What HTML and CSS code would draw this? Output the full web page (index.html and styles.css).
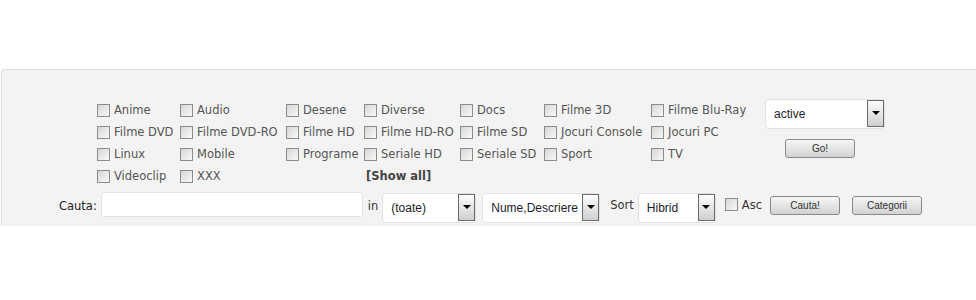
FILE: index.html
```html
<!DOCTYPE html>
<html lang="ro">
<head>
  <meta charset="UTF-8">
  <title>Cautare torrente</title>
  <link rel="stylesheet" href="styles.css">
</head>
<body>
  <div class="panel">
    <div class="top">
      <div class="cats">
        <label class="cat"><input type="checkbox"> Anime</label>
        <label class="cat"><input type="checkbox"> Audio</label>
        <label class="cat"><input type="checkbox"> Desene</label>
        <label class="cat"><input type="checkbox"> Diverse</label>
        <label class="cat"><input type="checkbox"> Docs</label>
        <label class="cat"><input type="checkbox"> Filme 3D</label>
        <label class="cat"><input type="checkbox"> Filme Blu-Ray</label>

        <label class="cat"><input type="checkbox"> Filme DVD</label>
        <label class="cat"><input type="checkbox"> Filme DVD-RO</label>
        <label class="cat"><input type="checkbox"> Filme HD</label>
        <label class="cat"><input type="checkbox"> Filme HD-RO</label>
        <label class="cat"><input type="checkbox"> Filme SD</label>
        <label class="cat"><input type="checkbox"> Jocuri Console</label>
        <label class="cat"><input type="checkbox"> Jocuri PC</label>

        <label class="cat"><input type="checkbox"> Linux</label>
        <label class="cat"><input type="checkbox"> Mobile</label>
        <label class="cat"><input type="checkbox"> Programe</label>
        <label class="cat"><input type="checkbox"> Seriale HD</label>
        <label class="cat"><input type="checkbox"> Seriale SD</label>
        <label class="cat"><input type="checkbox"> Sport</label>
        <label class="cat"><input type="checkbox"> TV</label>

        <label class="cat"><input type="checkbox"> Videoclip</label>
        <label class="cat"><input type="checkbox"> XXX</label>
        <span></span>
        <a class="show-all" href="#">[Show all]</a>
      </div>

      <div class="status">
        <div class="combo combo-status"><span class="combo-text">active</span><span class="arrow"></span></div>
        <button class="btn btn-go">Go!</button>
      </div>
    </div>

    <div class="search">
      <span class="lbl lbl-cauta">Cauta:</span>
      <input class="search-input" type="text">
      <span class="lbl lbl-in">in</span>
      <div class="combo combo-cat"><span class="combo-text">(toate)</span><span class="arrow"></span></div>
      <div class="combo combo-field"><span class="combo-text">Nume,Descriere</span><span class="arrow"></span></div>
      <span class="lbl lbl-sort">Sort</span>
      <div class="combo combo-sort"><span class="combo-text">Hibrid</span><span class="arrow"></span></div>
      <label class="lbl lbl-asc"><input type="checkbox"> Asc</label>
      <button class="btn btn-cauta">Cauta!</button>
      <button class="btn btn-categ">Categorii</button>
    </div>
  </div>
</body>
</html>
```

FILE: styles.css
```css
body {
  margin: 0;
  background-color: #fff;
  font-family: "DejaVu Sans", Verdana, sans-serif;
  font-size: 11.5px;
  color: #555;
}

.panel {
  margin: 69px 0 0 1px;
  height: 157px;
  background-color: #f3f3f3;
  border-top: 1px solid #dcdcdc;
  border-left: 1px solid #dcdcdc;
  border-top-left-radius: 4px;
  box-sizing: border-box;
  padding: 29px 0 0 95px;
}

.top {
  display: flex;
  align-items: flex-start;
}

.cats {
  display: grid;
  grid-template-columns: 83px 106px 78px 96px 84px 107px 114px;
  grid-auto-rows: 22px;
}

.cat {
  display: flex;
  align-items: center;
  gap: 4px;
  white-space: nowrap;
}

input[type="checkbox"] {
  appearance: none;
  -webkit-appearance: none;
  width: 13px;
  height: 13px;
  margin: 0;
  border: 1px solid #8c8c8c;
  background: linear-gradient(135deg, #d6d6d6, #f9f9f9);
  box-sizing: border-box;
  flex: none;
}

.show-all {
  display: flex;
  align-items: center;
  padding-left: 2px;
  font-weight: bold;
  color: #444;
  text-decoration: none;
}

.status {
  margin-left: 0;
  width: 120px;
}

/* caseta de select desenata */
.combo {
  display: flex;
  align-items: stretch;
  height: 30px;
  background-color: #fff;
  border: 1px solid #e2e2e2;
  border-radius: 4px;
  box-sizing: border-box;
  font-family: "Liberation Sans", Arial, sans-serif;
  font-size: 12px;
  color: #1c1c2c;
}

.combo-text {
  flex: 1;
  display: flex;
  align-items: center;
  padding-left: 8px;
  white-space: nowrap;
}

.arrow {
  width: 17px;
  margin: 0 0 1px 0;
  border: 1px solid #6a6a6a;
  background: linear-gradient(#fdfdfd, #cfcfcf);
  box-sizing: border-box;
  display: flex;
  align-items: center;
  justify-content: center;
}

.arrow::after {
  content: "";
  border-left: 4px solid transparent;
  border-right: 4px solid transparent;
  border-top: 4px solid #000;
  margin-top: -2px;
}

.combo-status {
  width: 120px;
}

.btn {
  width: 70px;
  height: 19px;
  padding: 0;
  border: 1px solid #8a8a8a;
  border-radius: 3px;
  background: linear-gradient(#f6f6f6, #d2d2d2);
  font-family: "Liberation Sans", Arial, sans-serif;
  font-size: 10px;
  color: #333;
  cursor: pointer;
}

.btn-go {
  display: block;
  margin: 10px 0 0 20px;
}

.search {
  display: flex;
  align-items: flex-start;
  margin: 5px 0 0 -38px;
}

.lbl {
  display: flex;
  align-items: center;
  height: 27px;
  color: #222;
}

.search-input {
  width: 262px;
  height: 25px;
  margin: 0 0 0 4px;
  border: 1px solid #e2e2e2;
  border-radius: 3px;
  background-color: #fff;
  box-sizing: border-box;
}

.lbl-in {
  margin-left: 5px;
  color: #333;
}

.combo-cat {
  width: 94px;
  margin: 1px 0 0 4px;
}

.combo-field {
  width: 118px;
  margin: 1px 0 0 6px;
}

.lbl-sort {
  margin-left: 10px;
  height: 25px;
  color: #333;
}

.combo-sort {
  width: 78px;
  margin: 1px 0 0 4px;
}

.lbl-asc {
  gap: 4px;
  margin-left: 9px;
  height: 25px;
  color: #333;
}

.btn-cauta {
  margin: 4px 0 0 8px;
}

.btn-categ {
  margin: 4px 0 0 12px;
}
```
